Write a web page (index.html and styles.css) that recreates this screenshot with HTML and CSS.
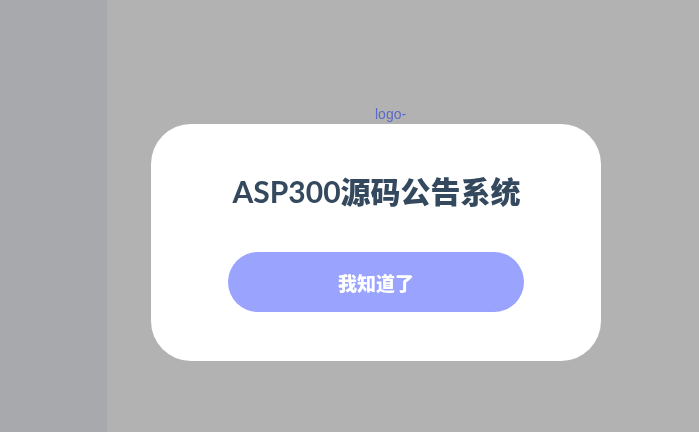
FILE: index.html
```html
<!DOCTYPE html>
<html lang="zh-CN">
<head>
<meta charset="utf-8">
<title>ASP300源码公告系统</title>
<link rel="stylesheet" href="styles.css">
</head>
<body>
<div class="page">
  <aside class="sidebar"></aside>
  <main class="content"></main>
</div>
<div class="overlay">
  <div class="dialog">
    <div class="logo">logo-</div>
    <div class="card">
      <h1 class="title"><span class="latin">ASP300</span>源码公告系统</h1>
      <button class="btn" type="button">我知道了</button>
    </div>
  </div>
</div>
</body>
</html>
```

FILE: styles.css
```css
html, body {
  margin: 0;
  padding: 0;
  height: 100%;
}
body {
  font-family: "Lato", "Noto Sans CJK SC", sans-serif;
  overflow: hidden;
}
.page {
  display: flex;
  height: 100%;
}
.sidebar {
  width: 107px;
  background: #f1f3f8;
}
.content {
  flex: 1;
  background: #ffffff;
}
.overlay {
  position: fixed;
  inset: 0;
  background: rgba(0, 0, 0, 0.3);
}
.dialog {
  display: flex;
  flex-direction: column;
  width: 450px;
  margin-left: 151px;
  padding-top: 106px;
}
.logo {
  height: 18px;
  padding-left: 224px;
  font-family: "Liberation Sans", Arial, sans-serif;
  font-size: 14px;
  line-height: 16px;
  color: #5b6ac4;
}
.card {
  display: flex;
  flex-direction: column;
  align-items: center;
  height: 237px;
  box-sizing: border-box;
  padding-top: 46px;
  background: #ffffff;
  border-radius: 40px;
}
.title {
  margin: 0 0 0 1px;
  height: 40px;
  font-family: "Noto Sans CJK SC", sans-serif;
  font-size: 30px;
  font-weight: 900;
  line-height: 40px;
  color: #34495e;
}
.latin {
  font-family: "Lato", sans-serif;
  font-weight: 700;
}
.btn {
  margin-top: 42px;
  width: 296px;
  height: 60px;
  border: none;
  border-radius: 30px;
  background: #9aa4ff;
  color: #ffffff;
  font-family: "Noto Sans CJK SC", sans-serif;
  font-size: 19px;
  font-weight: 900;
  padding: 0;
  cursor: pointer;
}
```
